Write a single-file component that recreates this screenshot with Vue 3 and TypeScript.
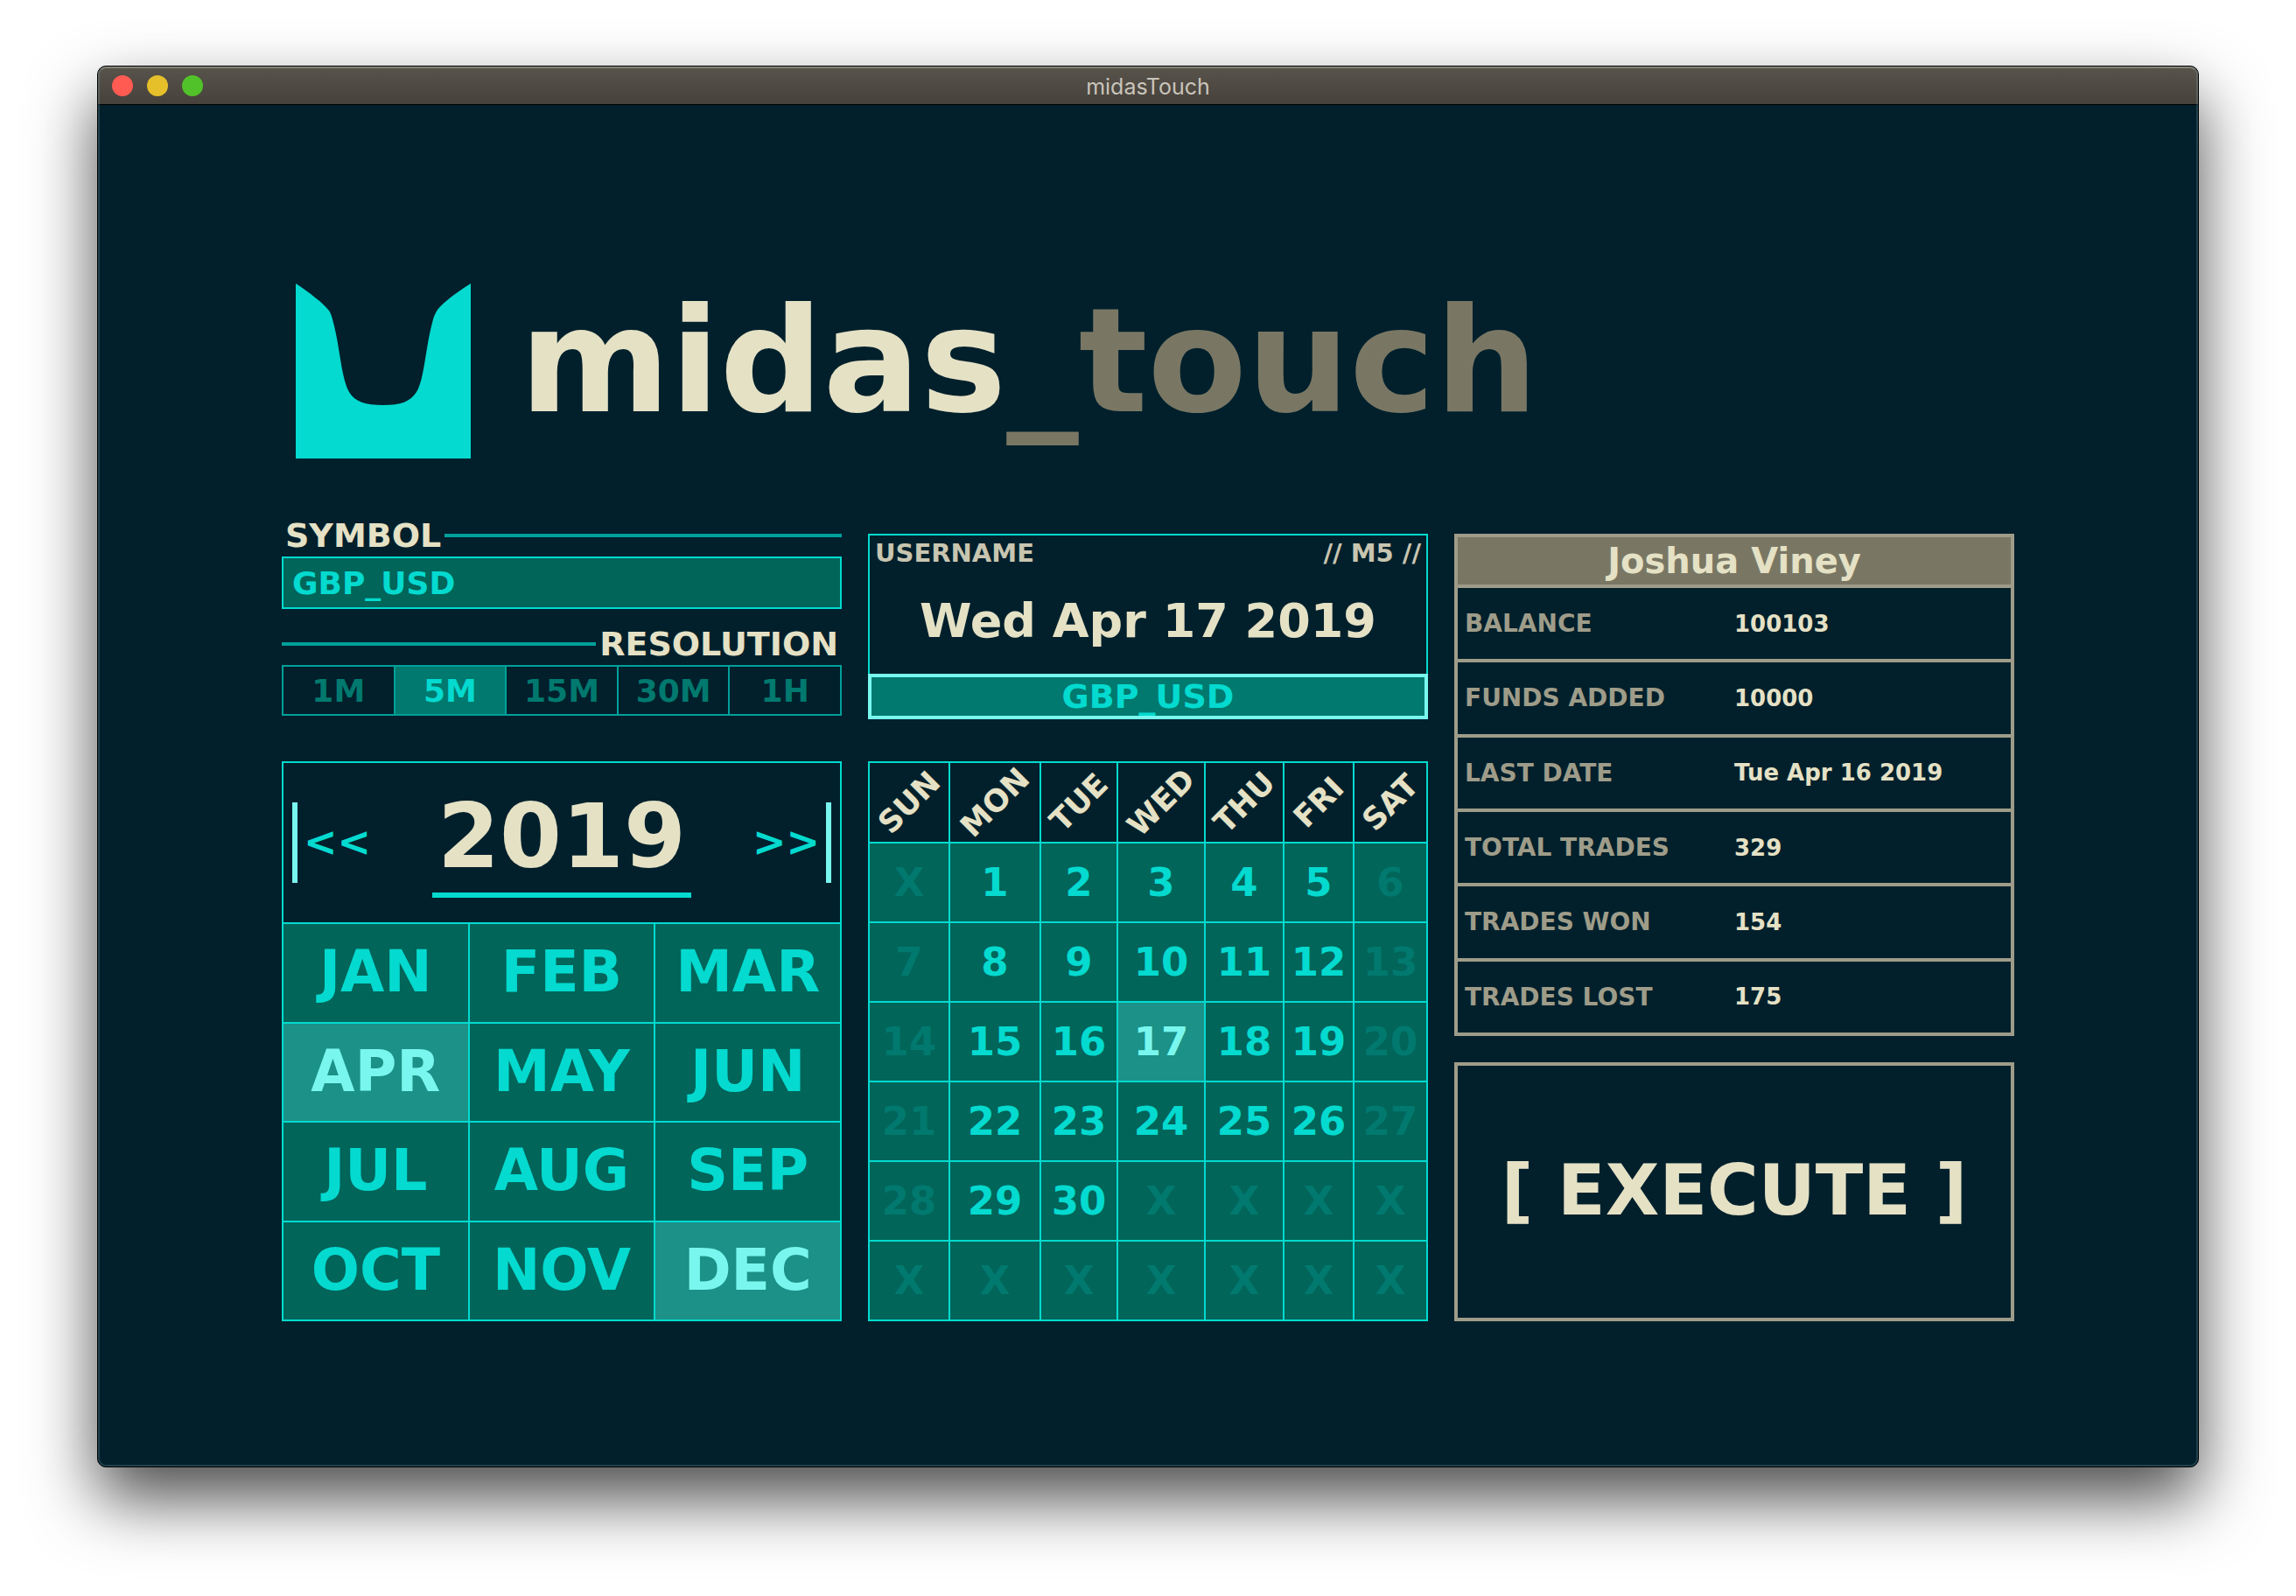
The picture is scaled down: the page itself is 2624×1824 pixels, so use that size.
<script setup lang="ts">
import { computed, ref } from 'vue'

interface Cell {
  label: string
  disabled: boolean
}

const symbol = ref('GBP_USD')
const resolutions = ['1M', '5M', '15M', '30M', '1H']
const resolution = ref('5M')
const year = ref(2019)
const months = ['JAN', 'FEB', 'MAR', 'APR', 'MAY', 'JUN', 'JUL', 'AUG', 'SEP', 'OCT', 'NOV', 'DEC']
const activeMonths = ref(['APR', 'DEC'])
const weekdays = ['SUN', 'MON', 'TUE', 'WED', 'THU', 'FRI', 'SAT']
const selectedDay = ref('17')

const firstWeekday = 1
const daysInMonth = 30

const weeks = computed<Cell[][]>(() =>
  Array.from({ length: 6 }, (_, w) =>
    Array.from({ length: 7 }, (_, d) => {
      const n = w * 7 + d - firstWeekday + 1
      const inMonth = n >= 1 && n <= daysInMonth
      return { label: inMonth ? String(n) : 'X', disabled: !inMonth || d === 0 || d === 6 }
    })
  )
)

const account = [
  { label: 'BALANCE', value: '100103' },
  { label: 'FUNDS ADDED', value: '10000' },
  { label: 'LAST DATE', value: 'Tue Apr 16 2019' },
  { label: 'TOTAL TRADES', value: '329' },
  { label: 'TRADES WON', value: '154' },
  { label: 'TRADES LOST', value: '175' }
]
</script>

<template>
  <div class="desktop">
    <div class="window">
      <div class="titlebar">
        <div class="lights">
          <button class="light close" aria-label="Close"></button>
          <button class="light minimise" aria-label="Minimise"></button>
          <button class="light zoom" aria-label="Zoom"></button>
        </div>
        <span class="caption">midasTouch</span>
      </div>

      <main class="content">
        <header class="brand">
          <svg class="logo" viewBox="0 0 200 200" aria-hidden="true">
            <path
              d="M0 0C15 10 31 22 38 31C40 34 41 37 42 41C48 62 50 84 54 103C56 112 58 119 61 124C67 135 80 139 100 139C120 139 131 135 138 124C141 119 143 112 145 103C149 84 151 62 157 41C158 37 160 33 162 30C170 20 186 9 200 0V200H0Z"
            />
          </svg>
          <h1 class="wordmark">midas<span>_touch</span></h1>
        </header>

        <div class="columns">
          <section class="column">
            <div class="rule-label"><label for="symbol">SYMBOL</label></div>
            <input id="symbol" v-model="symbol" class="symbol" type="text" />
            <div class="rule-label end"><span id="resolution">RESOLUTION</span></div>
            <div class="resolutions" role="group" aria-labelledby="resolution">
              <button
                v-for="r in resolutions"
                :key="r"
                :class="{ active: r === resolution }"
                :aria-pressed="r === resolution"
                @click="resolution = r"
              >
                {{ r }}
              </button>
            </div>

            <div class="year-panel">
              <div class="year-nav">
                <button class="step prev" aria-label="Previous year" @click="year--">&lt;&lt;</button>
                <span class="year">{{ year }}</span>
                <button class="step next" aria-label="Next year" @click="year++">&gt;&gt;</button>
              </div>
              <div class="months">
                <button
                  v-for="m in months"
                  :key="m"
                  :class="{ active: activeMonths.includes(m) }"
                  @click="activeMonths = [m]"
                >
                  {{ m }}
                </button>
              </div>
            </div>
          </section>

          <section class="column middle">
            <div class="summary">
              <div class="summary-top"><span>USERNAME</span><span>// M5 //</span></div>
              <div class="summary-date">Wed Apr 17 2019</div>
              <div class="summary-symbol">{{ symbol }}</div>
            </div>
            <table class="days">
              <colgroup>
                <col v-for="d in weekdays" :key="d" :class="d.toLowerCase()" />
              </colgroup>
              <thead>
                <tr>
                  <th v-for="d in weekdays" :key="d" scope="col"><span>{{ d }}</span></th>
                </tr>
              </thead>
              <tbody>
                <tr v-for="(week, w) in weeks" :key="w">
                  <td v-for="(day, d) in week" :key="d">
                    <button
                      :disabled="day.disabled"
                      :class="{ active: day.label === selectedDay }"
                      @click="selectedDay = day.label"
                    >
                      {{ day.label }}
                    </button>
                  </td>
                </tr>
              </tbody>
            </table>
          </section>

          <section class="column right">
            <table class="account">
              <thead>
                <tr>
                  <th colspan="2">Joshua Viney</th>
                </tr>
              </thead>
              <tbody>
                <tr v-for="row in account" :key="row.label">
                  <th scope="row">{{ row.label }}</th>
                  <td>{{ row.value }}</td>
                </tr>
              </tbody>
            </table>
            <button class="execute">[ EXECUTE ]</button>
          </section>
        </div>
      </main>
    </div>
  </div>
</template>

<style>
body {
  margin: 0;
  background: #fff;
}
</style>

<style scoped>
.desktop {
  --bg: #01202c;
  --cream: #e5e1c5;
  --stone: #9e9c89;
  --olive: #797764;
  --cyan: #04dacf;
  --teal: #00a099;
  --mid: #01796e;
  --deep: #01655a;
  --glow: #79f7ee;
  --lit: #1c9188;
  padding: 75px 111px 147px;
  font-family: 'DejaVu Sans', sans-serif;
  font-weight: 700;
  color: var(--cream);
}
.desktop * {
  box-sizing: border-box;
}
button,
input {
  margin: 0;
  padding: 0;
  border: 0;
  border-radius: 0;
  background: none;
  font: inherit;
  color: inherit;
}
.window {
  border: 1px solid #000;
  border-radius: 10px;
  background: var(--bg);
  overflow: hidden;
  box-shadow: 0 36px 76px rgba(0, 0, 0, 0.7);
  position: relative;
}
.window::after {
  content: '';
  position: absolute;
  inset: 0;
  border: 2px solid rgba(160, 200, 210, 0.2);
  border-top-color: rgba(200, 210, 190, 0.4);
  border-radius: 9px;
  pointer-events: none;
}
.titlebar {
  display: grid;
  grid-template-columns: 1fr auto 1fr;
  align-items: center;
  height: 44px;
  padding: 0 16px;
  border-bottom: 1px solid #000;
  background: linear-gradient(#58534b, #46413b);
}
.lights {
  display: flex;
  gap: 16px;
}
.light {
  width: 24px;
  height: 24px;
  border-radius: 50%;
}
.close {
  background: #ff5b52;
}
.minimise {
  background: #e6c02a;
}
.zoom {
  background: #52c22b;
}
.caption {
  padding-top: 2px;
  font: 400 25px/40px Inter, sans-serif;
  color: #c9c4ba;
}
.content {
  padding: 204px 210px 166px;
}
.brand {
  display: flex;
  align-items: center;
  gap: 56px;
  padding-left: 16px;
  margin-bottom: 66px;
}
.logo {
  width: 200px;
  height: 200px;
  fill: var(--cyan);
}
.wordmark {
  margin: 0;
  padding-bottom: 22px;
  font-size: 165px;
  line-height: 178px;
}
.wordmark span {
  color: var(--olive);
}
.columns {
  display: grid;
  grid-template-columns: repeat(3, minmax(0, 1fr));
  gap: 30px;
}
.column {
  display: flex;
  flex-direction: column;
}
.middle,
.right {
  padding-top: 20px;
}

.rule-label {
  display: flex;
  align-items: center;
  gap: 4px;
  height: 44px;
  margin-bottom: 2px;
  padding-left: 4px;
  font-size: 38px;
  line-height: 44px;
}
.rule-label::after {
  content: '';
  flex: 1;
  height: 4px;
  background: var(--teal);
}
.rule-label.end {
  flex-direction: row-reverse;
  margin-top: 18px;
  padding: 0 4px 0 0;
}
.symbol {
  height: 60px;
  padding: 0 10px;
  border: 2px solid var(--cyan);
  background: var(--deep);
  font-size: 36px;
  color: var(--cyan);
}
.resolutions {
  display: grid;
  grid-template-columns: repeat(5, 1fr);
  gap: 2px;
  height: 58px;
  border: 2px solid var(--teal);
  background: var(--teal);
}
.resolutions button {
  background: var(--bg);
  font-size: 36px;
  color: var(--mid);
}
.resolutions .active {
  background: var(--mid);
  color: var(--cyan);
}

.year-panel {
  display: flex;
  flex-direction: column;
  flex: 1;
  margin-top: 52px;
  border: 2px solid var(--cyan);
}
.year-nav {
  display: flex;
  align-items: center;
  justify-content: space-between;
  height: 184px;
  padding: 0 10px;
  border-bottom: 2px solid var(--cyan);
}
.step {
  height: 92px;
  padding-bottom: 2px;
  font-size: 46px;
  color: var(--cyan);
}
.prev {
  padding-left: 7px;
  border-left: 6px solid var(--glow);
}
.next {
  padding-right: 7px;
  border-right: 6px solid var(--glow);
}
.year {
  margin-bottom: 8px;
  padding: 0 6px;
  border-bottom: 6px solid var(--cyan);
  font-size: 102px;
  line-height: 128px;
}
.months {
  display: grid;
  flex: 1;
  grid-template-columns: repeat(3, 1fr);
  grid-auto-rows: 1fr;
  gap: 2px;
  background: var(--cyan);
}
.months button {
  padding-bottom: 2px;
  background: var(--deep);
  font-size: 65px;
  color: var(--cyan);
}
.months .active,
.days .active {
  background: var(--lit);
  color: var(--glow);
}

.summary {
  display: flex;
  flex-direction: column;
  height: 212px;
  margin-bottom: 48px;
  border: 2px solid var(--cyan);
  border-bottom: 0;
}
.summary-top {
  display: flex;
  justify-content: space-between;
  padding: 0 6px;
  font-size: 29px;
  line-height: 40px;
  color: #c8c5b0;
}
.summary-date {
  flex: 1;
  font-size: 54px;
  line-height: 116px;
  text-align: center;
}
.summary-symbol {
  height: 52px;
  margin: 0 -2px;
  border: 4px solid var(--glow);
  background: var(--mid);
  font-size: 38px;
  line-height: 44px;
  text-align: center;
  color: var(--cyan);
}

.days {
  width: 100%;
  table-layout: fixed;
  border-spacing: 2px;
  background: var(--cyan);
}
.sun {
  width: 90px;
}
.mon {
  width: 102px;
}
.tue {
  width: 86px;
}
.wed {
  width: 98px;
}
.thu {
  width: 88px;
}
.fri {
  width: 78px;
}
.sat {
  width: 82px;
}
.days th,
.days td {
  height: 89px;
  padding: 0;
}
.days th {
  height: 90px;
  background: var(--bg);
  font-size: 35px;
}
.days th span {
  display: block;
  transform: rotate(-45deg);
}
.days button {
  display: block;
  width: 100%;
  height: 89px;
  background: var(--deep);
  font-size: 45px;
  color: var(--cyan);
}
.days button.active {
  background: var(--lit);
  color: var(--glow);
}
.days button:disabled {
  color: var(--mid);
}

.account {
  width: 100%;
  height: 574px;
  margin-bottom: 30px;
  table-layout: fixed;
  border: 4px solid var(--stone);
  border-collapse: collapse;
}
.account tr {
  border-top: 4px solid var(--stone);
}
.account thead th {
  height: 58px;
  padding: 0;
  background: var(--olive);
  font-size: 40px;
  line-height: 44px;
}
.account tbody th {
  padding: 0 0 0 8px;
  font-size: 28px;
  text-align: left;
  color: var(--stone);
}
.account td {
  padding: 0;
  font-size: 26px;
}
.execute {
  flex: 1;
  padding-bottom: 4px;
  border: 4px solid var(--stone);
  font-size: 80px;
}
</style>
